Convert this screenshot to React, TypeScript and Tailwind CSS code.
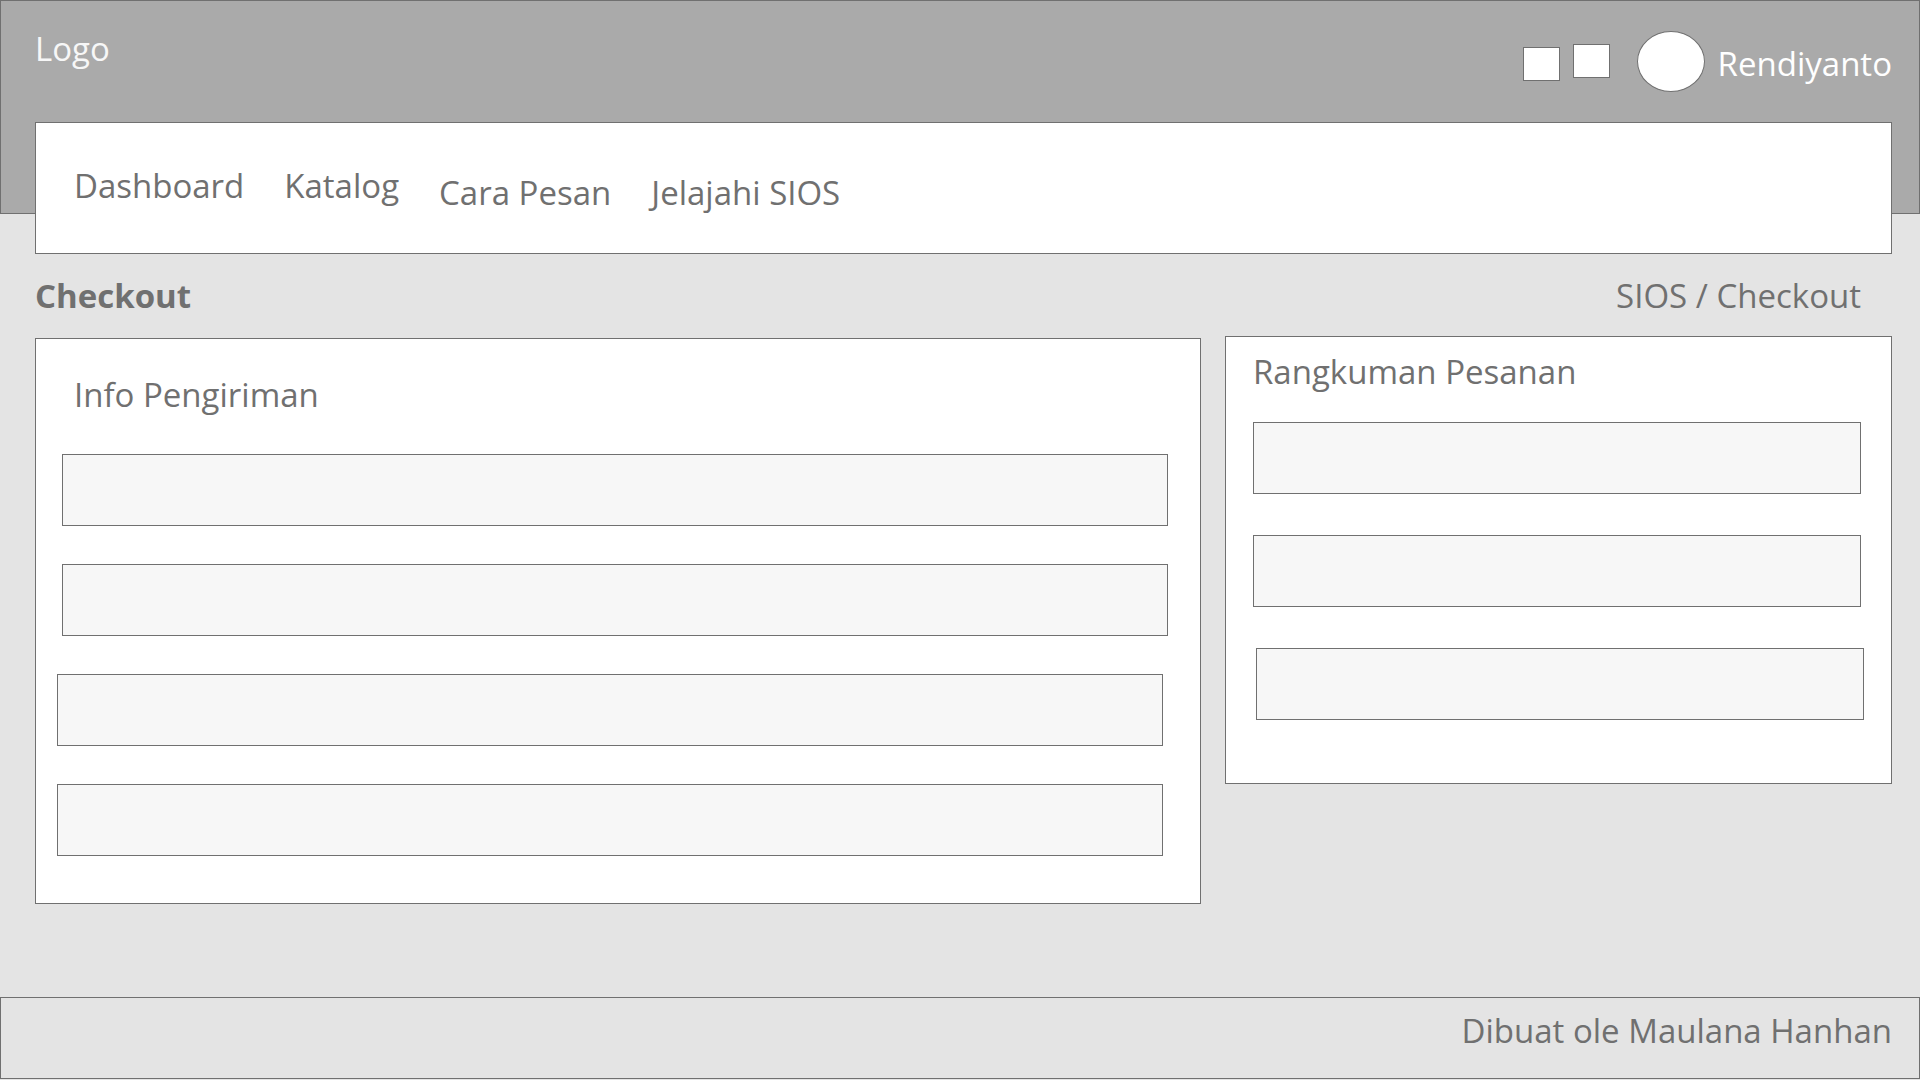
type FieldRow = { name: string; label: string; inset: string };

const shippingRows: FieldRow[] = [
  { name: "shipping-1", label: "Info Pengiriman 1", inset: "pl-[26px] pr-8" },
  { name: "shipping-2", label: "Info Pengiriman 2", inset: "pl-[26px] pr-8" },
  { name: "shipping-3", label: "Info Pengiriman 3", inset: "pl-[21px] pr-[37px]" },
  { name: "shipping-4", label: "Info Pengiriman 4", inset: "pl-[21px] pr-[37px]" },
];

const summaryRows: FieldRow[] = [
  { name: "summary-1", label: "Rangkuman Pesanan 1", inset: "pl-[27px] pr-[30px]" },
  { name: "summary-2", label: "Rangkuman Pesanan 2", inset: "pl-[27px] pr-[30px]" },
  { name: "summary-3", label: "Rangkuman Pesanan 3", inset: "pl-[30px] pr-[27px]" },
];

function Field({ name, label, inset }: FieldRow) {
  return (
    <div className={inset}>
      <input
        type="text"
        name={name}
        aria-label={label}
        className="block h-[72px] w-full border border-[#707070] bg-[#f7f7f7] px-4 outline-none"
      />
    </div>
  );
}

export default function App() {
  return (
    <div className="flex min-h-screen flex-col bg-[#e4e4e4] pb-px font-['Open_Sans',sans-serif] text-[33px] leading-[50px] text-[#707070]">
      <header className="flex h-[214px] items-start justify-between border border-[#707070] bg-[#aaaaaa] pr-[27px] pl-[34px]">
        <a href="#" className="mt-[23px] text-[#f7f7f7]">
          Logo
        </a>
        <div className="flex items-start pt-[30px] text-white">
          <button
            type="button"
            aria-label="Keranjang"
            className="mt-4 mr-[13px] h-[34px] w-[37px] border border-[#707070] bg-white"
          />
          <button
            type="button"
            aria-label="Notifikasi"
            className="mt-[13px] mr-[27px] h-[34px] w-[37px] border border-[#707070] bg-white"
          />
          <button
            type="button"
            aria-label="Profil"
            className="mr-[13px] h-[61px] w-[68px] rounded-[50%] border border-[#707070] bg-white"
          />
          <span className="mt-2">Rendiyanto</span>
        </div>
      </header>

      <nav className="-mt-[92px] mr-7 ml-[35px] flex h-[132px] items-start gap-10 border border-[#707070] bg-white pt-[38px] pl-[38px]">
        <div className="flex gap-10">
          <a href="#">Dashboard</a>
          <a href="#">Katalog</a>
        </div>
        <div className="flex gap-10 pt-[7px]">
          <a href="#">Cara Pesan</a>
          <a href="#">Jelajahi SIOS</a>
        </div>
      </nav>

      <div className="mt-[17px] flex items-center justify-between pr-[59px] pl-[35px]">
        <h1 className="font-bold">Checkout</h1>
        <p>
          <a href="#">SIOS</a> / Checkout
        </p>
      </div>

      <main className="mt-[15px] mr-7 mb-10 ml-[35px] grid grid-cols-[1166fr_667fr] items-start gap-6">
        <section className="mt-0.5 border border-[#707070] bg-white pt-[31px] pb-[47px]">
          <h2 className="pl-[38px]">Info Pengiriman</h2>
          <div className="mt-[34px] flex flex-col gap-[38px]">
            {shippingRows.map((row) => (
              <Field key={row.name} {...row} />
            ))}
          </div>
        </section>
        <section className="border border-[#707070] bg-white pt-2.5 pb-[63px]">
          <h2 className="pl-[27px]">Rangkuman Pesanan</h2>
          <div className="mt-[25px] flex flex-col gap-[41px]">
            {summaryRows.map((row) => (
              <Field key={row.name} {...row} />
            ))}
          </div>
        </section>
      </main>

      <footer className="mt-auto h-[82px] border border-[#707070] pt-2 pr-[27px] text-right">
        Dibuat ole Maulana Hanhan
      </footer>
    </div>
  );
}
